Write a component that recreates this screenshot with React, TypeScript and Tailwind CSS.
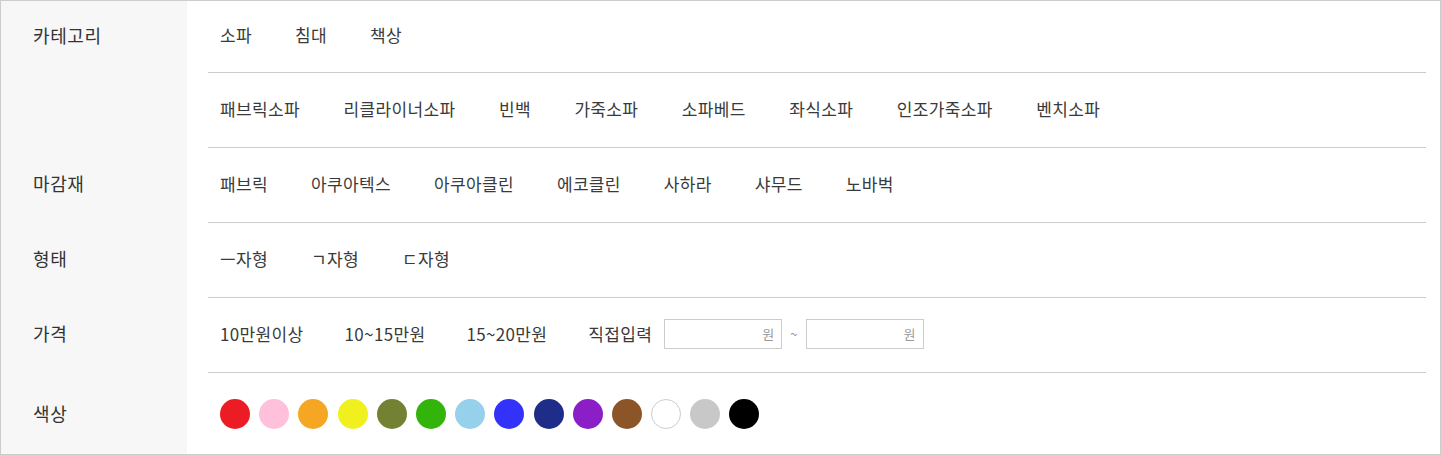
import React from "react";

const font = { fontFamily: '"Noto Sans CJK KR", "Noto Sans", sans-serif' };

function Opt({ children }: { children: React.ReactNode }) {
  return <span className="text-[17px] tracking-[0.35px] text-[#3a3a3a] whitespace-nowrap">{children}</span>;
}

function SubRow({ children, h = "h-[74px]", gap = "gap-[43px]" }: { children: React.ReactNode; h?: string; gap?: string }) {
  return (
    <div className={`${h} flex items-center pl-[12px] pb-[3px] ${gap} border-b border-[#cccccc]`}>
      {children}
    </div>
  );
}

function Group({ label, labelH = "h-[74px]", children }: { label: string; labelH?: string; children: React.ReactNode }) {
  return (
    <div className="flex">
      <div className="w-[186px] shrink-0 bg-[#f7f7f7] pl-[32px]">
        <div className={`${labelH} flex items-center text-[18px] tracking-[0.6px] text-[#333333] pb-[3px]`}>{label}</div>
      </div>
      <div className="flex-1 pl-[21px] pr-[14px]">{children}</div>
    </div>
  );
}

const colors = [
  "#ed1c24",
  "#ffc0dc",
  "#f5a623",
  "#f0f01e",
  "#738232",
  "#32b40a",
  "#96d0eb",
  "#3232fa",
  "#1e2d87",
  "#8c1ec8",
  "#8c5528",
  "#ffffff",
  "#c8c8c8",
  "#000000",
];

export default function App() {
  return (
    <div style={font} className="w-[1441px] h-[455px] border border-[#cccccc] bg-white flex flex-col overflow-hidden">
      <Group label="카테고리" labelH="h-[71px]">
        <SubRow h="h-[72px]">
          <Opt>소파</Opt>
          <Opt>침대</Opt>
          <Opt>책상</Opt>
        </SubRow>
        <SubRow h="h-[75px]" gap="gap-[43.5px]">
          <Opt>패브릭소파</Opt>
          <Opt>리클라이너소파</Opt>
          <Opt>빈백</Opt>
          <Opt>가죽소파</Opt>
          <Opt>소파베드</Opt>
          <Opt>좌식소파</Opt>
          <Opt>인조가죽소파</Opt>
          <Opt>벤치소파</Opt>
        </SubRow>
      </Group>
      <Group label="마감재">
        <SubRow h="h-[75px]">
          <Opt>패브릭</Opt>
          <Opt>아쿠아텍스</Opt>
          <Opt>아쿠아클린</Opt>
          <Opt>에코클린</Opt>
          <Opt>사하라</Opt>
          <Opt>샤무드</Opt>
          <Opt>노바벅</Opt>
        </SubRow>
      </Group>
      <Group label="형태">
        <SubRow h="h-[75px]">
          <Opt>ㅡ자형</Opt>
          <Opt>ㄱ자형</Opt>
          <Opt>ㄷ자형</Opt>
        </SubRow>
      </Group>
      <Group label="가격">
        <SubRow h="h-[75px]" gap="gap-[41px]">
          <Opt>10만원이상</Opt>
          <Opt>10~15만원</Opt>
          <Opt>15~20만원</Opt>
          <div className="flex items-center">
            <Opt>직접입력</Opt>
            <div className="ml-[12px] w-[118px] h-[30px] border border-[#cccccc] flex items-center justify-end pr-[7px] text-[13px] text-[#999999]">원</div>
            <span className="mx-[8px] text-[13px] text-[#999999]">~</span>
            <div className="w-[118px] h-[30px] border border-[#cccccc] flex items-center justify-end pr-[7px] text-[13px] text-[#999999]">원</div>
          </div>
        </SubRow>
      </Group>
      <div className="flex">
        <div className="w-[186px] shrink-0 bg-[#f7f7f7] pl-[32px]">
          <div className="h-[81px] flex items-center text-[18px] tracking-[0.6px] text-[#333333]">색상</div>
        </div>
        <div className="flex-1 pl-[21px] pr-[14px]">
          <div className="h-[81px] flex items-center pl-[12px] gap-[9.2px]">
            {colors.map((c, i) => (
              <span
                key={i}
                className={`w-[30px] h-[30px] rounded-full shrink-0 ${c === "#ffffff" ? "border border-[#cccccc]" : ""}`}
                style={{ backgroundColor: c }}
              />
            ))}
          </div>
        </div>
      </div>
    </div>
  );
}
